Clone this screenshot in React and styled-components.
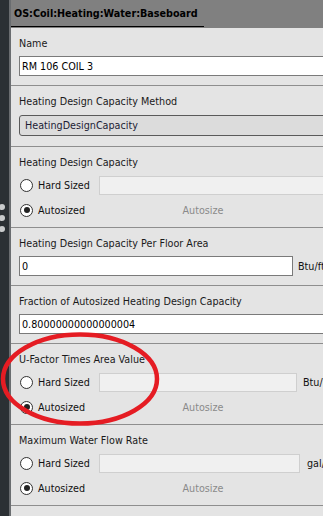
import styled, { createGlobalStyle } from 'styled-components'

const GlobalStyle = createGlobalStyle`
  html, body {
    margin: 0;
    padding: 0;
    overflow: hidden;
    background: #e4e4e4;
  }
`

const font = `"DejaVu Sans Condensed", "DejaVu Sans", "Liberation Sans", sans-serif`

function RadioField({ label, unit, inputWidth, unitGap }) {
  return (
    <Section $radio>
      <Label>{label}</Label>
      <RadioRow $first>
        <Radio />
        <RadioText>Hard Sized</RadioText>
        <DisabledInput $width={inputWidth} />
        {unit && <Unit $gap={unitGap}>{unit}</Unit>}
      </RadioRow>
      <RadioRow>
        <Radio $checked />
        <RadioText>Autosized</RadioText>
        <AutosizeText>Autosize</AutosizeText>
      </RadioRow>
    </Section>
  )
}

export default function App() {
  return (
    <>
      <GlobalStyle />
      <Page>
        <SideStrip>
          <Dot />
          <Dot />
          <Dot />
        </SideStrip>
        <Panel>
          <Header>
            <Tab>OS:Coil:Heating:Water:Baseboard</Tab>
          </Header>

          <Section>
            <Label>Name</Label>
            <TextInput defaultValue="RM 106 COIL 3" />
          </Section>

          <Section $combo>
            <Label>Heating Design Capacity Method</Label>
            <Combo>HeatingDesignCapacity</Combo>
          </Section>

          <RadioField label="Heating Design Capacity" />

          <Section>
            <Label>Heating Design Capacity Per Floor Area</Label>
            <InputRow>
              <TextInput defaultValue="0" $width={274} />
              <Unit $gap={5}>Btu/ft²</Unit>
            </InputRow>
          </Section>

          <Section>
            <Label>Fraction of Autosized Heating Design Capacity</Label>
            <TextInput defaultValue="0.80000000000000004" />
          </Section>

          <RadioField label="U-Factor Times Area Value" unit="Btu/h·R" inputWidth={198} unitGap={6} />

          <RadioField label="Maximum Water Flow Rate" unit="gal/min" inputWidth={201} unitGap={7} />
        </Panel>

        <Annotation width="323" height="516" viewBox="0 0 323 516">
          <ellipse cx="80" cy="379" rx="77" ry="44.5" fill="none" stroke="#e51c23" strokeWidth="4.5" />
        </Annotation>
      </Page>
    </>
  )
}

const Page = styled.div`
  position: relative;
  display: flex;
  width: 323px;
  height: 516px;
  overflow: hidden;
  font-family: ${font};
  font-size: 10.7px;
  color: #111;
`

const SideStrip = styled.div`
  flex: 0 0 9px;
  display: flex;
  flex-direction: column;
  gap: 5px;
  padding-top: 204px;
  background: #2b3034;
  border-right: 2px solid #6a6d70;
  overflow: hidden;
`

const Dot = styled.div`
  width: 6px;
  height: 6px;
  margin-left: -1px;
  border-radius: 50%;
  background: #c9cbcc;
`

const Panel = styled.div`
  flex: 0 0 420px;
  display: flex;
  flex-direction: column;
  background: #e4e4e4;
`

const Header = styled.div`
  height: 28px;
  background: #808080;
  display: flex;
  align-items: stretch;
`

const Tab = styled.div`
  width: 190px;
  padding-left: 3px;
  display: flex;
  align-items: center;
  font-weight: bold;
  color: #000;
  border-bottom: 1px solid #000;
  margin-bottom: 1px;
`

const Section = styled.div`
  display: flex;
  flex-direction: column;
  gap: ${p => (p.$radio ? '0' : p.$combo ? '5px' : '4px')};
  padding: 8px 0 ${p => (p.$radio ? '5px' : p.$combo ? '10px' : '9px')} 8px;
  border-bottom: 1px solid #8e8e8e;
`

const Label = styled.div`
  height: 16px;
  line-height: 16px;
  color: #1a1a1a;
`

const TextInput = styled.input`
  box-sizing: border-box;
  height: 20px;
  width: ${p => (p.$width ? `${p.$width}px` : '100%')};
  margin: 0;
  padding: 0 2px;
  border: 1px solid #7a7a7a;
  background: #fff;
  font-family: ${font};
  font-size: 10.7px;
  color: #000;
  outline: none;
`

const Combo = styled.div`
  box-sizing: border-box;
  height: 21px;
  line-height: 19px;
  padding-left: 5px;
  border: 1px solid #5a5a5a;
  border-radius: 3px;
  background: #dcdcdc;
  color: #1d1d35;
`

const InputRow = styled.div`
  display: flex;
  align-items: center;
`

const Unit = styled.span`
  margin-left: ${p => p.$gap || 5}px;
  white-space: nowrap;
  color: #111;
`

const RadioRow = styled.div`
  display: flex;
  align-items: center;
  height: ${p => (p.$first ? '26px' : '24px')};
  margin-top: ${p => (p.$first ? '1px' : '0')};
`

const Radio = styled.span`
  box-sizing: border-box;
  width: 13px;
  height: 13px;
  margin-left: 1px;
  border-radius: 50%;
  border: 1px solid #333;
  background: radial-gradient(circle, #ffffff 60%, #f0f0f0 100%);
  position: relative;
  flex: none;

  &::after {
    content: '';
    display: ${p => (p.$checked ? 'block' : 'none')};
    position: absolute;
    left: 2.5px;
    top: 2.5px;
    width: 6px;
    height: 6px;
    border-radius: 50%;
    background: #222;
  }
`

const RadioText = styled.span`
  width: 61px;
  margin-left: 5px;
  color: #111;
  white-space: nowrap;
`

const DisabledInput = styled.div`
  box-sizing: border-box;
  flex: ${p => (p.$width ? 'none' : '1')};
  width: ${p => (p.$width ? `${p.$width}px` : 'auto')};
  height: 19px;
  border: 1px solid #cfcfcf;
  background: #f0f0f0;
`

const AutosizeText = styled.span`
  width: 208px;
  text-align: center;
  color: #8a8a8a;
`

const Annotation = styled.svg`
  position: absolute;
  left: 0;
  top: 0;
  pointer-events: none;
`
